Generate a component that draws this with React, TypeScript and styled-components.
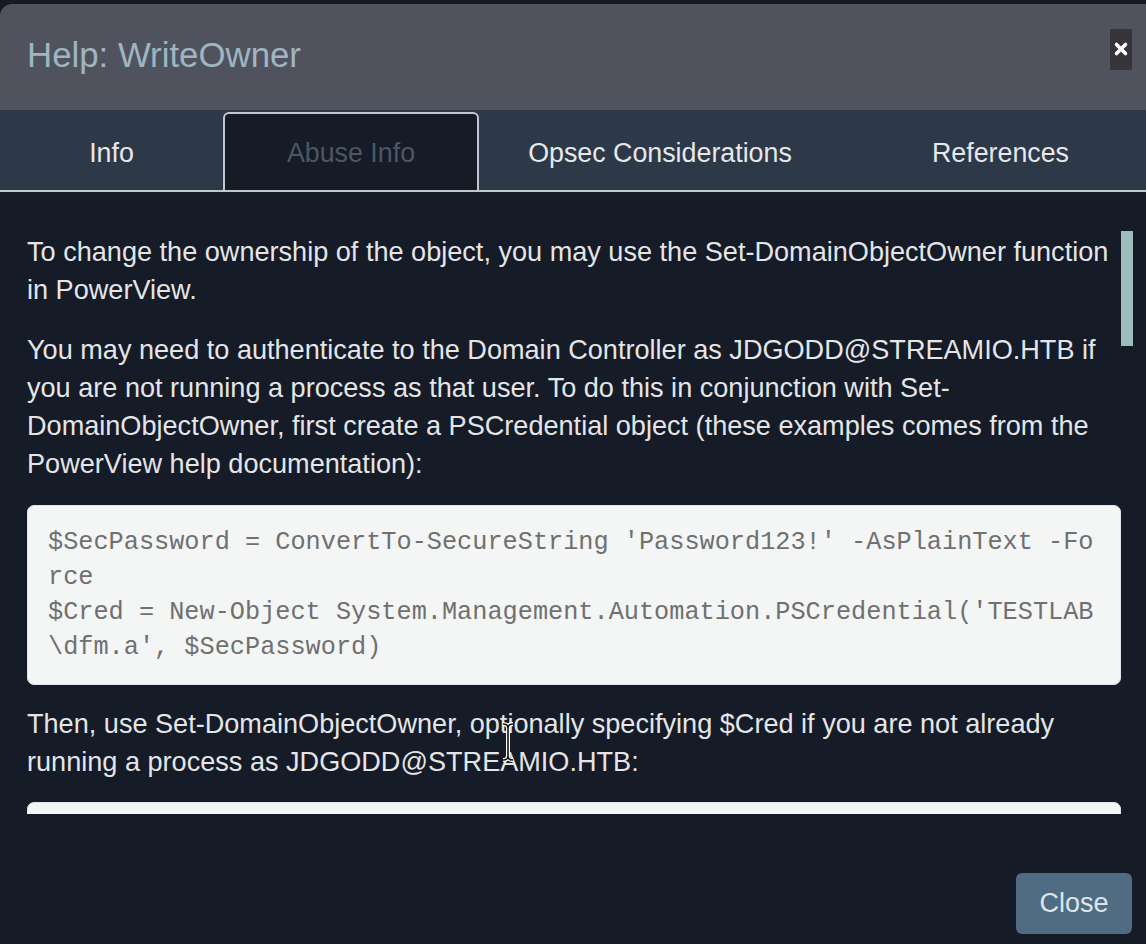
import React, { useState } from 'react';
import styled, { createGlobalStyle } from 'styled-components';

const COLORS = {
    backdrop: '#151a23',
    header: '#50535e',
    title: '#9fb5c2',
    tabBar: '#2d3848',
    tabText: '#e6e8ea',
    tabMuted: '#4e5663',
    tabBorder: '#c3c7cc',
    body: '#151b27',
    text: '#e4e5e7',
    codeBg: '#f4f5f5',
    codeText: '#707070',
    thumb: '#9dbcbc',
    button: '#4f6c82',
    buttonText: '#dde5ea',
};

const GlobalStyle = createGlobalStyle`
    html, body {
        margin: 0;
        padding: 0;
        background: ${COLORS.backdrop};
        overflow: hidden;
    }
    * {
        box-sizing: border-box;
    }
`;

const Backdrop = styled.div`
    width: 1146px;
    height: 944px;
    padding-top: 4px;
    overflow: hidden;
    font-family: 'Liberation Sans', Arial, Helvetica, sans-serif;
`;

const Modal = styled.div`
    width: 1160px;
    background: ${COLORS.body};
    border-radius: 12px 12px 0 0;
    overflow: hidden;
`;

const Header = styled.div`
    height: 106px;
    background: ${COLORS.header};
    display: flex;
    align-items: center;
    justify-content: space-between;
    padding: 0 28px 0 27px;
`;

const Title = styled.h4`
    margin: 0;
    font-size: 34.8px;
    font-weight: 400;
    color: ${COLORS.title};
    padding-bottom: 4px;
`;

const CloseX = styled.button`
    width: 22px;
    height: 41px;
    margin-bottom: 16px;
    border: none;
    padding: 0;
    background: #38353a;
    display: flex;
    align-items: center;
    justify-content: center;
    cursor: pointer;
`;

const Tabs = styled.div`
    display: grid;
    grid-template-columns: 223px 256px 362px 1fr;
    height: 82px;
    background: ${COLORS.tabBar};
    border-bottom: 2px solid ${COLORS.tabBorder};
`;

const Tab = styled.div<{ $active?: boolean }>`
    display: flex;
    align-items: center;
    justify-content: center;
    font-size: 26.8px;
    color: ${(p) => (p.$active ? COLORS.tabMuted : COLORS.tabText)};
    background: ${(p) => (p.$active ? COLORS.body : 'transparent')};
    border: 2px solid ${(p) => (p.$active ? COLORS.tabBorder : 'transparent')};
    border-bottom: none;
    border-radius: 6px 6px 0 0;
    margin-top: 2px;
    padding-top: 2px;
    cursor: pointer;
`;

const BodyWrap = styled.div`
    display: flex;
    padding: 39px 27px 0 27px;
`;

const ScrollArea = styled.div`
    flex: 1;
    height: 583px;
    overflow: hidden;
    padding-top: 2px;
`;

const ScrollTrack = styled.div`
    width: 12px;
    height: 583px;
    flex-shrink: 0;
`;

const ScrollThumb = styled.div`
    height: 115px;
    background: ${COLORS.thumb};
`;

const Paragraph = styled.p`
    margin: 0 0 21px;
    font-size: 27.1px;
    line-height: 38.3px;
    color: ${COLORS.text};
`;

const Code = styled.pre`
    margin: 0 0 20px;
    padding: 19px 22px 19px 20px;
    background: ${COLORS.codeBg};
    border: 1px solid #e2e3e4;
    border-radius: 7px;
    font-family: 'Liberation Mono', 'Courier New', monospace;
    font-size: 25.25px;
    line-height: 35px;
    color: ${COLORS.codeText};
    white-space: pre-wrap;
    word-break: break-all;
`;

const Footer = styled.div`
    display: flex;
    justify-content: flex-end;
    padding: 59px 28px 20px;
`;

const CloseButton = styled.button`
    width: 116px;
    height: 61px;
    border: none;
    border-radius: 6px;
    background: ${COLORS.button};
    color: ${COLORS.buttonText};
    font-family: 'Liberation Sans', Arial, sans-serif;
    font-size: 27px;
    cursor: pointer;
`;

const CursorMark = styled.svg`
    position: absolute;
    left: 501px;
    top: 722px;
    pointer-events: none;
`;

const TABS = ['Info', 'Abuse Info', 'Opsec Considerations', 'References'];

const EXTRA = [
    'To abuse ownership of a user object, you may grant yourself the GenericAll privilege. This can be accomplished using the Add-DomainObjectAcl function in PowerView.',
    'You may need to authenticate to the Domain Controller as JDGODD@STREAMIO.HTB if you are not running a process as that user. To do this in conjunction with Add-DomainObjectAcl, first create a PSCredential object (these examples comes from the PowerView help documentation):',
    'Then, use Add-DomainObjectAcl, optionally specifying $Cred if you are not already running a process as JDGODD@STREAMIO.HTB:',
    'Cleanup for the owner can be done by using Set-DomainObjectOwner once again, specifying the original owner of the object.',
];

export default function App() {
    const [active, setActive] = useState(1);

    return (
        <>
            <GlobalStyle />
            <Backdrop>
                <Modal>
                    <Header>
                        <Title>Help: WriteOwner</Title>
                        <CloseX aria-label="close">
                            <svg width="16" height="16" viewBox="0 0 16 16">
                                <path d="M3.5 3.5 L12.5 12.5 M12.5 3.5 L3.5 12.5" stroke="#ffffff" strokeWidth="3.6" strokeLinecap="round" />
                            </svg>
                        </CloseX>
                    </Header>

                    <Tabs>
                        {TABS.map((label, i) => (
                            <Tab key={label} $active={i === active} onClick={() => setActive(i)}>
                                {label}
                            </Tab>
                        ))}
                    </Tabs>

                    <BodyWrap>
                        <ScrollArea>
                            <Paragraph>
                                To change the ownership of the object, you may use the Set-DomainObjectOwner function in
                                PowerView.
                            </Paragraph>
                            <Paragraph>
                                You may need to authenticate to the Domain Controller as JDGODD@STREAMIO.HTB if you are not
                                running a process as that user. To do this in conjunction with Set-DomainObjectOwner, first
                                create a PSCredential object (these examples comes from the PowerView help documentation):
                            </Paragraph>
                            <Code>
                                {"$SecPassword = ConvertTo-SecureString 'Password123!' -AsPlainText -Force\n$Cred = New-Object System.Management.Automation.PSCredential('TESTLAB\\dfm.a', $SecPassword)"}
                            </Code>
                            <Paragraph>
                                Then, use Set-DomainObjectOwner, optionally specifying $Cred if you are not already running a
                                process as JDGODD@STREAMIO.HTB:
                            </Paragraph>
                            <Code>
                                {'Set-DomainObjectOwner -Credential $Cred -TargetIdentity dfm -OwnerIdentity harmj0y'}
                            </Code>
                            {EXTRA.map((text, i) => (
                                <Paragraph key={i}>{text}</Paragraph>
                            ))}
                        </ScrollArea>
                        <ScrollTrack>
                            <ScrollThumb />
                        </ScrollTrack>
                    </BodyWrap>

                    <Footer>
                        <CloseButton>Close</CloseButton>
                    </Footer>
                </Modal>
            </Backdrop>
            <CursorMark width="14" height="40" viewBox="0 0 14 40">
                <path d="M2 2 Q7 2 7 6 L7 34 Q7 38 2 38 M12 2 Q7 2 7 6 M7 34 Q7 38 12 38" fill="none" stroke="#ffffff" strokeWidth="4" />
                <path d="M2 2 Q7 2 7 6 L7 34 Q7 38 2 38 M12 2 Q7 2 7 6 M7 34 Q7 38 12 38" fill="none" stroke="#111111" strokeWidth="1.6" />
            </CursorMark>
        </>
    );
}
